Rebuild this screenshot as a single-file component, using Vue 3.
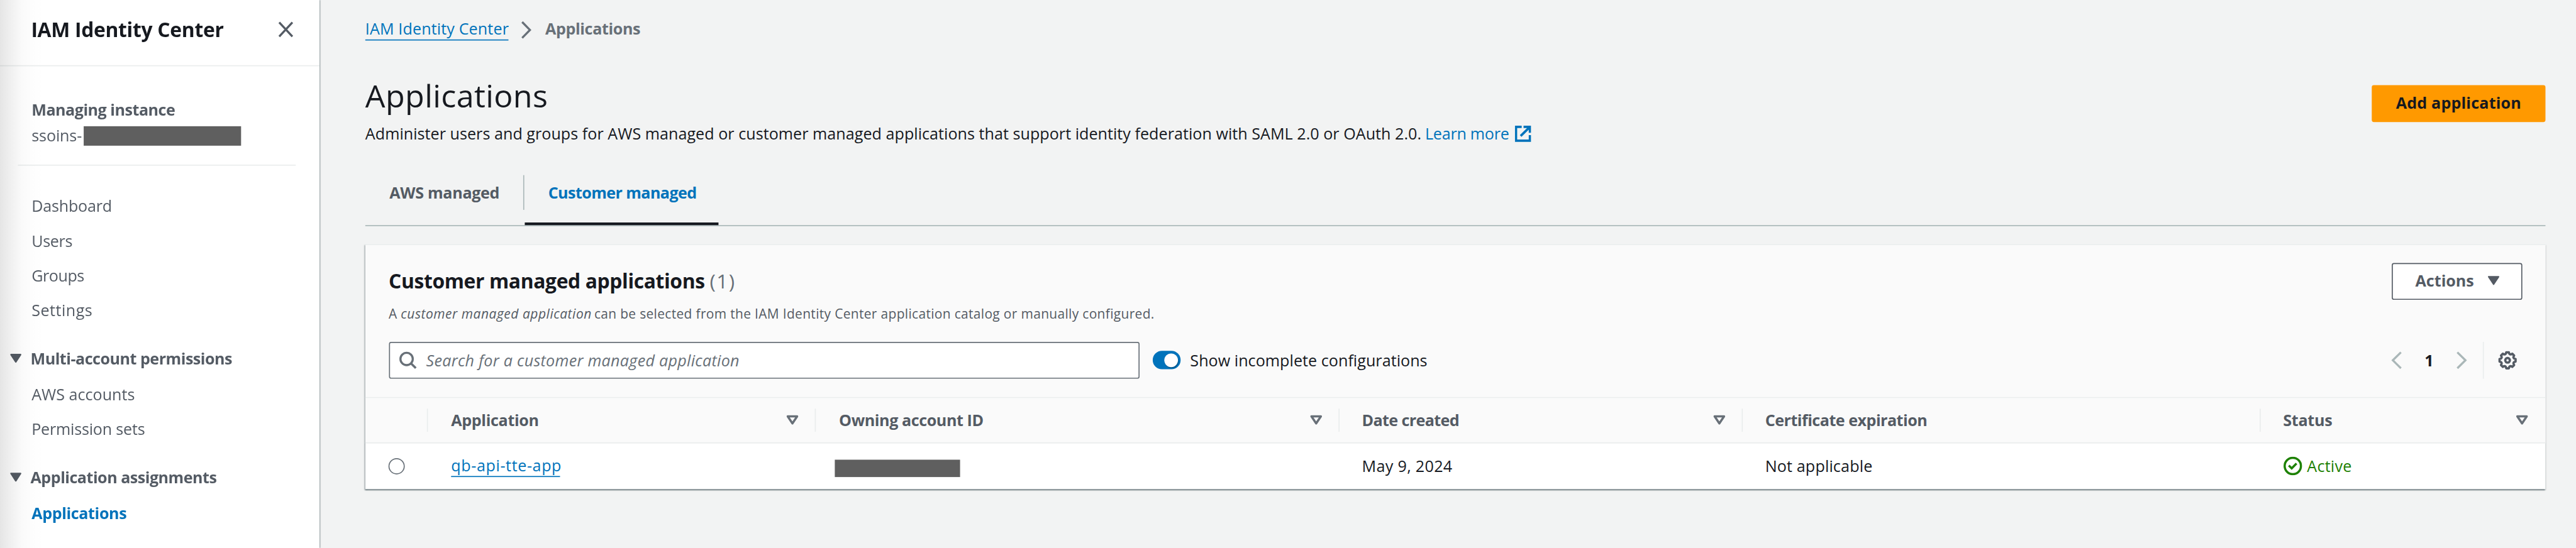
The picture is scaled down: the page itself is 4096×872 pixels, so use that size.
<script setup>
const mainLinks = [
  { label: 'Dashboard', cls: 'ls-25' },
  { label: 'Users', cls: 'ls-40' },
  { label: 'Groups', cls: 'ls-55' },
  { label: 'Settings', cls: 'ls60' },
]
const sections = [
  {
    title: 'Multi-account permissions',
    links: [
      { label: 'AWS accounts', cls: 'ls0' },
      { label: 'Permission sets', cls: 'ls-25' },
    ],
  },
  {
    title: 'Application assignments',
    links: [{ label: 'Applications', cls: 'active' }],
  },
]
const columns = [
  { label: 'Application', cls: 'ls-40', sort: true },
  { label: 'Owning account ID', cls: 'ls-50', sort: true },
  { label: 'Date created', cls: 'ls-75', sort: true },
  { label: 'Certificate expiration', cls: 'ls-60', sort: false },
  { label: 'Status', cls: 'ls-32', sort: true },
]

// Eight-toothed outline of the settings gear, centred on the origin.
const polar = (r, deg) => {
  const a = (deg * Math.PI) / 180
  return `${(r * Math.cos(a)).toFixed(2)} ${(r * Math.sin(a)).toFixed(2)}`
}
const gearPath =
  Array.from({ length: 8 }, (_, k) => {
    const a = k * 45
    return `${k ? 'L' : 'M'}${polar(15.4, a - 9)}L${polar(15.4, a + 9)}Q${polar(9.6, a + 22.5)} ${polar(15.4, a + 36)}`
  }).join('') + 'Z'
</script>

<template>
  <div class="viewport">
    <div class="console">
      <aside class="sidebar">
        <header class="side-header">
          <h2 class="side-title">IAM Identity Center</h2>
          <svg class="close" width="30" height="32" viewBox="0 0 30 32">
            <path d="M2.5 2.5L27.5 29.5M27.5 2.5L2.5 29.5" fill="none" stroke="#545b64" stroke-width="4" />
          </svg>
        </header>
        <div class="instance">
          <div class="instance-label">Managing instance</div>
          <div class="instance-id"><span class="instance-text">ssoins-</span><span class="redact redact-id"></span></div>
        </div>
        <nav class="nav">
          <a v-for="l in mainLinks" :key="l.label" class="nav-link" :class="l.cls">{{ l.label }}</a>
          <section v-for="s in sections" :key="s.title" class="nav-section">
            <div class="nav-head">
              <svg width="24" height="19" viewBox="0 0 24 19">
                <path d="M3 2.2H21L12 16Z" fill="#545b64" stroke="#545b64" stroke-width="3" stroke-linejoin="round" />
              </svg>
              <span>{{ s.title }}</span>
            </div>
            <a v-for="l in s.links" :key="l.label" class="nav-link" :class="l.cls">{{ l.label }}</a>
          </section>
        </nav>
        <div class="edge-shade"></div>
      </aside>

      <main class="main">
        <div class="crumbs">
          <a class="crumb-link">IAM Identity Center</a>
          <svg class="crumb-sep" width="20" height="34" viewBox="0 0 20 34">
            <path d="M2 1.8L16.8 17L2 32.2" fill="none" stroke="#687078" stroke-width="4" />
          </svg>
          <span class="crumb-current">Applications</span>
        </div>

        <div class="page-header">
          <div>
            <h1 class="page-title">Applications</h1>
            <p class="page-desc">
              <span>Administer users and groups for AWS managed or customer managed applications that support identity federation with SAML 2.0 or OAuth 2.0.</span>
              <a class="learn">Learn more</a>
              <svg class="external" width="31" height="31" viewBox="0 0 31 31">
                <path d="M13 2.2H2.2V28.6H28.6V18M16.5 2.2H28.6V13.5M28 2.8L11 19.6" fill="none" stroke="#0073bb" stroke-width="4.4" />
              </svg>
            </p>
          </div>
          <button class="btn btn-primary">Add application</button>
        </div>

        <div class="tabs">
          <div class="tab"><span class="tab-label">AWS managed</span><i class="tab-divider"></i></div>
          <div class="tab tab-active"><span class="tab-label">Customer managed</span></div>
        </div>

        <section class="panel">
          <div class="panel-header">
            <div class="panel-top">
              <h2 class="panel-title">Customer managed applications <span class="count">(1)</span></h2>
              <button class="btn btn-normal">
                <span>Actions</span>
                <svg width="23" height="19" viewBox="0 0 23 19">
                  <path d="M2.2 2.2H20.8L11.5 16.2Z" fill="#545b64" stroke="#545b64" stroke-width="3" stroke-linejoin="round" />
                </svg>
              </button>
            </div>
            <p class="panel-desc"><span class="lead">A</span><em>customer managed application</em><span>can be selected from the IAM Identity Center application catalog or manually configured.</span></p>
            <div class="toolbar">
              <div class="search">
                <svg width="34" height="34" viewBox="0 0 34 34">
                  <circle cx="14.5" cy="14.5" r="11.7" fill="none" stroke="#687078" stroke-width="4" />
                  <path d="M22.8 22.8L32 32" fill="none" stroke="#687078" stroke-width="4.2" />
                </svg>
                <span class="placeholder">Search for a customer managed application</span>
              </div>
              <div class="toggle"><span class="knob"></span></div>
              <span class="toggle-label">Show incomplete configurations</span>
              <div class="pager">
                <svg width="21" height="34" viewBox="0 0 21 34">
                  <path d="M18.4 1.8L3 17L18.4 32.2" fill="none" stroke="#aab7b8" stroke-width="4" />
                </svg>
                <span class="page-no">1</span>
                <svg width="21" height="34" viewBox="0 0 21 34">
                  <path d="M2.6 1.8L18 17L2.6 32.2" fill="none" stroke="#aab7b8" stroke-width="4" />
                </svg>
                <i class="pager-divider"></i>
                <svg width="36" height="36" viewBox="-18 -18 36 36">
                  <path :d="gearPath" fill="none" stroke="#545b64" stroke-width="4.4" stroke-linejoin="round" />
                  <circle r="4.4" fill="none" stroke="#545b64" stroke-width="4.4" />
                </svg>
              </div>
            </div>
          </div>

          <div class="grid grid-head">
            <div class="th"></div>
            <div v-for="c in columns" :key="c.label" class="th">
              <span :class="c.cls">{{ c.label }}</span>
              <svg v-if="c.sort" width="23" height="19" viewBox="0 0 23 19">
                <path d="M2.5 2.5H20.5L11.5 16Z" fill="none" stroke="#687078" stroke-width="4.2" stroke-linejoin="round" />
              </svg>
            </div>
          </div>

          <div class="grid grid-row">
            <div class="td td-radio"><span class="radio"></span></div>
            <div class="td"><a class="app-link">qb-api-tte-app</a></div>
            <div class="td td-account"><span class="redact redact-account"></span></div>
            <div class="td td-text ls38">May 9, 2024</div>
            <div class="td td-text ls18">Not applicable</div>
            <div class="td td-status">
              <svg width="36" height="36" viewBox="0 0 36 36">
                <circle cx="18" cy="18" r="15.5" fill="none" stroke="#1d8102" stroke-width="4.2" />
                <path d="M10.4 17L15.9 22.4L25 13.2" fill="none" stroke="#1d8102" stroke-width="4.2" />
              </svg>
              <span>Active</span>
            </div>
          </div>
        </section>
      </main>
    </div>
  </div>
</template>

<style>
html,
body {
  margin: 0;
  background: #f2f3f3;
}
</style>

<style scoped>
.viewport {
  width: 4096px;
  height: 872px;
  overflow: hidden;
}
.console {
  display: flex;
  box-sizing: border-box;
  width: 4894px;
  height: 1042px;
  transform: scale(0.83694);
  transform-origin: 0 0;
  background: #f2f3f3;
  color: #16191f;
  font-family: 'Open Sans', 'Noto Sans', sans-serif;
  font-size: 30px;
  white-space: nowrap;
}
.console * {
  box-sizing: border-box;
}
h1,
h2,
p {
  margin: 0;
}
svg {
  display: block;
  flex: none;
}

/* letter-spacing steps */
.ls-75 { letter-spacing: -0.75px; }
.ls-60 { letter-spacing: -0.6px; }
.ls-55 { letter-spacing: -0.55px; }
.ls-50 { letter-spacing: -0.5px; }
.ls-40 { letter-spacing: -0.4px; }
.ls-32 { letter-spacing: -0.32px; }
.ls-25 { letter-spacing: -0.25px; }
.ls0 { letter-spacing: 0; }
.ls18 { letter-spacing: 0.18px; }
.ls38 { letter-spacing: 0.38px; }
.ls60 { letter-spacing: 0.6px; }

/* sidebar */
.sidebar {
  position: relative;
  flex: none;
  width: 607px;
  height: 1042px;
  background: #fff;
  color: #545b64;
  box-shadow: 1px 0 2px 0 rgba(0, 28, 36, 0.45);
}
.edge-shade {
  position: absolute;
  inset: 0 auto 0 0;
  width: 84px;
  background: linear-gradient(to right, rgba(0, 0, 0, 0.1), rgba(0, 0, 0, 0.065) 20%, rgba(0, 0, 0, 0.02) 50%, rgba(0, 0, 0, 0.008) 72%, transparent);
}
.side-header {
  display: flex;
  justify-content: space-between;
  height: 126px;
  padding: 0 49px 0 59px;
  border-bottom: 2px solid #eaeded;
}
.side-title {
  font-size: 38px;
  line-height: 113px;
  font-weight: 700;
  letter-spacing: -0.35px;
  color: #16191f;
}
.close {
  margin-top: 40px;
}
.instance {
  margin: 0 45px 0 34px;
  height: 189px;
  padding: 58.4px 0 0 26px;
  border-bottom: 2px solid #eaeded;
  line-height: 49px;
}
.instance-label {
  font-weight: 700;
  letter-spacing: -0.59px;
}
.instance-id {
  display: flex;
  align-items: center;
}
.instance-text {
  width: 99px;
  letter-spacing: -0.15px;
}
.redact {
  background: #5f5f5f;
}
.redact-id {
  width: 299px;
  height: 37px;
  margin-top: 2px;
}
.nav {
  padding-top: 43.8px;
  line-height: 66px;
}
.nav-link {
  display: block;
  height: 66px;
  padding-left: 60px;
}
.nav-section {
  margin-top: 26px;
}
.nav-head {
  display: flex;
  align-items: center;
  gap: 16px;
  height: 66px;
  margin-bottom: 2px;
  padding-left: 18px;
  font-weight: 700;
  letter-spacing: -0.6px;
}
.active {
  font-weight: 700;
  letter-spacing: -0.45px;
  color: #0073bb;
}

/* page */
.main {
  width: 4287px;
  padding: 33.4px 58px 0 87px;
}
.crumbs {
  display: flex;
  align-items: flex-start;
  height: 111.3px;
  line-height: 44px;
}
.crumb-link {
  width: 272px;
  height: 43.8px;
  border-bottom: 2px solid #0073bb;
  color: #0073bb;
  letter-spacing: 0.15px;
}
.crumb-sep {
  margin: 6.6px 26px 0 24px;
}
.crumb-current {
  font-weight: 700;
  letter-spacing: -0.45px;
  color: #687078;
}
.page-header {
  display: flex;
  justify-content: space-between;
  height: 183.3px;
}
.page-title {
  font-size: 60px;
  line-height: 72px;
  font-weight: 400;
  letter-spacing: 0.44px;
}
.page-desc {
  display: flex;
  margin-top: 14.9px;
  line-height: 44px;
  letter-spacing: 0.04px;
}
.learn {
  margin-left: 7px;
  color: #0073bb;
  letter-spacing: -0.3px;
}
.external {
  margin: 7.6px 0 0 11px;
}
.btn {
  display: flex;
  align-items: center;
  justify-content: center;
  height: 70px;
  padding: 0 0 2px;
  border-radius: 4px;
  font: inherit;
  font-weight: 700;
}
.btn-primary {
  width: 330px;
  margin-top: 17.3px;
  border: 0;
  background: #ff9900;
  color: #16191f;
  letter-spacing: 0.22px;
}
.btn-normal {
  width: 248px;
  gap: 26px;
  padding-left: 2px;
  border: 2px solid #545b64;
  background: #fff;
  color: #545b64;
}
.tabs {
  display: flex;
  height: 102px;
  border-bottom: 2px solid #aab7b8;
  font-weight: 700;
  line-height: 75px;
  color: #545b64;
}
.tab {
  display: flex;
  justify-content: space-between;
  width: 302.5px;
  height: 100px;
  padding-left: 46px;
  letter-spacing: -0.38px;
}
.tab-divider {
  width: 2px;
  height: 66px;
  margin: 5px 1px 0 0;
  background: #aab7b8;
}
.tab-active {
  width: 368.5px;
  padding-left: 45px;
  border-bottom: 5px solid #16191f;
  color: #0073bb;
  letter-spacing: -0.7px;
}

/* table panel */
.panel {
  height: 466px;
  margin-top: 34.4px;
  border-top: 2px solid #eaeded;
  background: #fff;
  box-shadow:
    0 2px 2px 0 rgba(0, 28, 36, 0.5),
    2px 2px 2px 0 rgba(0, 28, 36, 0.15),
    -2px 2px 2px 0 rgba(0, 28, 36, 0.15);
}
.panel-header {
  height: 290.6px;
  padding: 33.6px 44px 0 44.5px;
  border-bottom: 2px solid #eaeded;
  background: #fafafa;
}
.panel-top {
  display: flex;
  justify-content: space-between;
  height: 70px;
}
.panel-title {
  font-size: 38px;
  line-height: 67.6px;
  font-weight: 700;
  letter-spacing: -0.44px;
}
.count {
  font-weight: 400;
  letter-spacing: 1.6px;
  color: #687078;
}
.panel-desc {
  display: flex;
  margin-top: 5.8px;
  font-size: 25px;
  line-height: 40px;
  letter-spacing: 0.41px;
  color: #545b64;
}
.lead {
  width: 23px;
}
.panel-desc em {
  width: 367.5px;
  letter-spacing: 0.65px;
}
.toolbar {
  display: flex;
  align-items: center;
  height: 70px;
  margin-top: 34.2px;
}
.search {
  display: flex;
  align-items: center;
  width: 1426px;
  height: 70px;
  padding-left: 17px;
  gap: 18px;
  border: 2px solid #687078;
  border-radius: 4px;
  background: #fff;
}
.placeholder {
  padding-bottom: 1px;
  font-style: italic;
  letter-spacing: 0.34px;
  color: #687078;
}
.toggle {
  display: flex;
  align-items: center;
  justify-content: flex-end;
  width: 53px;
  height: 35px;
  margin-left: 25px;
  padding-right: 5px;
  border-radius: 18px;
  background: #0073bb;
}
.knob {
  width: 26px;
  height: 26px;
  border-radius: 50%;
  background: #fff;
  box-shadow: 1px 2px 1px rgba(0, 0, 0, 0.25);
}
.toggle-label {
  margin-left: 18.5px;
  padding-bottom: 1px;
  letter-spacing: 0.05px;
}
.pager {
  display: flex;
  align-items: center;
  margin-left: auto;
  padding-right: 10px;
}
.page-no {
  width: 102px;
  padding-bottom: 1px;
  text-align: center;
  font-weight: 700;
}
.pager-divider {
  width: 2px;
  height: 70px;
  margin: 0 27px 0 30px;
  background: #eaeded;
}
.grid {
  display: grid;
  grid-template-columns: 119px 737px 995px 766px 984px 541px;
}
.grid-head {
  height: 86px;
  border-bottom: 2px solid #eaeded;
  background: #fafafa;
}
.th {
  position: relative;
  display: flex;
  align-items: center;
  justify-content: space-between;
  padding: 0 33px 1px 44px;
  font-weight: 700;
  color: #545b64;
}
.th:nth-child(n + 4) {
  padding-left: 42.5px;
}
.th:not(:last-child)::after {
  content: '';
  position: absolute;
  top: 20px;
  right: 0;
  width: 2px;
  height: 44px;
  background: #eaeded;
}
.grid-row {
  height: 87.4px;
}
.td {
  display: flex;
  align-items: center;
  padding: 0 0 3px 44px;
}
.td-text {
  padding-left: 42.5px;
}
.td-radio {
  padding: 0 0 1px 44px;
}
.radio {
  width: 31px;
  height: 31px;
  border: 2px solid #687078;
  border-radius: 50%;
  background: #fff;
}
.app-link {
  width: 207px;
  height: 44px;
  border-bottom: 2px solid #0073bb;
  line-height: 44px;
  letter-spacing: 0.73px;
  color: #0073bb;
}
.td-account {
  padding: 7px 0 0 36px;
}
.redact-account {
  width: 238px;
  height: 33px;
}
.td-status {
  gap: 9px;
  padding-left: 43px;
  padding-bottom: 1px;
  color: #1d8102;
  letter-spacing: 0.28px;
}
.td-status span {
  padding-bottom: 2px;
}
</style>
